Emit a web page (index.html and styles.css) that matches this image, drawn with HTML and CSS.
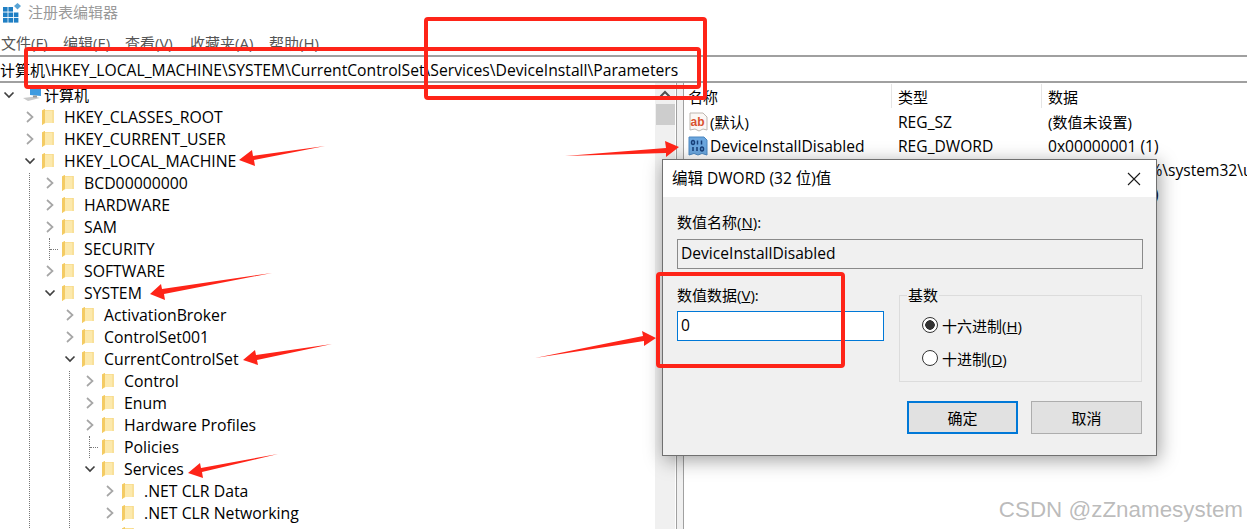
FILE: index.html
```html
<!DOCTYPE html>
<html lang="zh-CN">
<head>
<meta charset="utf-8">
<title>注册表编辑器</title>
<link rel="stylesheet" href="styles.css">
</head>
<body>
<svg class="defs" width="0" height="0" aria-hidden="true">
  <defs>
    <symbol id="folder" viewBox="0 0 12 16">
      <path d="M0 1.5 L3 0 V1 H11.5 V14 H3.5 L0 16 Z" fill="#f7d77f"/>
      <path d="M0 1.5 L3 0 V13.5 L0 16 Z" fill="#f4cb63"/>
      <path d="M3 1.5 H11.5 V14 H3 Z" fill="#fce9ad"/>
      <path d="M11.5 1 V14 H10.6 V1 Z" fill="#f6d67f"/>
    </symbol>
    <symbol id="chev-r" viewBox="0 0 10 14">
      <path d="M2 2 L7.5 7 L2 12" fill="none" stroke="#a6a6a6" stroke-width="1.7"/>
    </symbol>
    <symbol id="chev-d" viewBox="0 0 12 10">
      <path d="M1.5 2.5 L6 7 L10.5 2.5" fill="none" stroke="#404040" stroke-width="1.7"/>
    </symbol>
  </defs>
</svg>

<div class="app">
  <header class="titlebar">
    <svg class="appicon" viewBox="0 0 19 20" width="19" height="20">
      <path d="M14.5 0 L18 3 L14.5 6.5 L11 3 Z" fill="#5aa5d6"/>
      <g fill="#1f7fc4">
        <rect x="0" y="4" width="4.6" height="4.6"/><rect x="5.4" y="4" width="4.6" height="4.6"/>
        <rect x="0" y="9.5" width="4.6" height="4.6"/><rect x="5.4" y="9.5" width="4.6" height="4.6"/><rect x="10.8" y="9.5" width="4.6" height="4.6"/>
        <rect x="0" y="15" width="4.6" height="4.6"/><rect x="5.4" y="15" width="4.6" height="4.6"/><rect x="10.8" y="15" width="4.6" height="4.6"/>
      </g>
    </svg>
    <span class="apptitle">注册表编辑器</span>
  </header>

  <nav class="menubar">
    <span class="m1">文件(F)</span><span class="m2">编辑(E)</span><span class="m3">查看(V)</span><span class="m4">收藏夹(A)</span><span class="m5">帮助(H)</span>
  </nav>

  <div class="address"><span class="addr-root">计算机</span>\HKEY_LOCAL_MACHINE\SYSTEM\CurrentControlSet\Services\DeviceInstall\Parameters</div>

  <main class="panes">
    <section class="tree">
      <div class="treebody">
        <div class="row rootrow">
          <span class="chev"><svg width="12" height="10"><use href="#chev-d"/></svg></span>
          <svg class="pc" viewBox="0 0 20 18" width="20" height="18">
            <path d="M8 1 L19 2.5 V11 L8 10 Z" fill="#3f9be0"/>
            <path d="M8 1 L19 2.5 V4 L8 3 Z" fill="#8cc9f2"/>
            <path d="M1 13 L13 11.5 L18 13 L6 16 Z" fill="#c9c9c9"/>
            <path d="M11 10.5 H15 V12.5 H11 Z" fill="#9a9a9a"/>
          </svg>
          <span class="rootlabel">计算机</span>
        </div>
        <div class="group top">
          <div class="item"><div class="row"><span class="chev"><svg width="10" height="14"><use href="#chev-r"/></svg></span><svg class="fld"><use href="#folder"/></svg><span class="label">HKEY_CLASSES_ROOT</span></div></div>
          <div class="item"><div class="row"><span class="chev"><svg width="10" height="14"><use href="#chev-r"/></svg></span><svg class="fld"><use href="#folder"/></svg><span class="label">HKEY_CURRENT_USER</span></div></div>
          <div class="item">
            <div class="row"><span class="chev"><svg width="12" height="10"><use href="#chev-d"/></svg></span><svg class="fld"><use href="#folder"/></svg><span class="label">HKEY_LOCAL_MACHINE</span></div>
            <div class="group">
              <div class="item"><div class="row"><span class="chev"><svg width="10" height="14"><use href="#chev-r"/></svg></span><svg class="fld"><use href="#folder"/></svg><span class="label">BCD00000000</span></div></div>
              <div class="item"><div class="row"><span class="chev"><svg width="10" height="14"><use href="#chev-r"/></svg></span><svg class="fld"><use href="#folder"/></svg><span class="label">HARDWARE</span></div></div>
              <div class="item"><div class="row"><span class="chev"><svg width="10" height="14"><use href="#chev-r"/></svg></span><svg class="fld"><use href="#folder"/></svg><span class="label">SAM</span></div></div>
              <div class="item"><div class="row"><span class="stub"></span><svg class="fld"><use href="#folder"/></svg><span class="label">SECURITY</span></div></div>
              <div class="item"><div class="row"><span class="chev"><svg width="10" height="14"><use href="#chev-r"/></svg></span><svg class="fld"><use href="#folder"/></svg><span class="label">SOFTWARE</span></div></div>
              <div class="item last">
                <div class="row"><span class="chev"><svg width="12" height="10"><use href="#chev-d"/></svg></span><svg class="fld"><use href="#folder"/></svg><span class="label">SYSTEM</span></div>
                <div class="group">
                  <div class="item"><div class="row"><span class="chev"><svg width="10" height="14"><use href="#chev-r"/></svg></span><svg class="fld"><use href="#folder"/></svg><span class="label">ActivationBroker</span></div></div>
                  <div class="item"><div class="row"><span class="chev"><svg width="10" height="14"><use href="#chev-r"/></svg></span><svg class="fld"><use href="#folder"/></svg><span class="label">ControlSet001</span></div></div>
                  <div class="item">
                    <div class="row"><span class="chev"><svg width="12" height="10"><use href="#chev-d"/></svg></span><svg class="fld"><use href="#folder"/></svg><span class="label">CurrentControlSet</span></div>
                    <div class="group">
                      <div class="item"><div class="row"><span class="chev"><svg width="10" height="14"><use href="#chev-r"/></svg></span><svg class="fld"><use href="#folder"/></svg><span class="label">Control</span></div></div>
                      <div class="item"><div class="row"><span class="chev"><svg width="10" height="14"><use href="#chev-r"/></svg></span><svg class="fld"><use href="#folder"/></svg><span class="label">Enum</span></div></div>
                      <div class="item"><div class="row"><span class="chev"><svg width="10" height="14"><use href="#chev-r"/></svg></span><svg class="fld"><use href="#folder"/></svg><span class="label">Hardware Profiles</span></div></div>
                      <div class="item"><div class="row"><span class="stub"></span><svg class="fld"><use href="#folder"/></svg><span class="label">Policies</span></div></div>
                      <div class="item last">
                        <div class="row"><span class="chev"><svg width="12" height="10"><use href="#chev-d"/></svg></span><svg class="fld"><use href="#folder"/></svg><span class="label">Services</span></div>
                        <div class="group">
                          <div class="item"><div class="row"><span class="chev"><svg width="10" height="14"><use href="#chev-r"/></svg></span><svg class="fld"><use href="#folder"/></svg><span class="label">.NET CLR Data</span></div></div>
                          <div class="item"><div class="row"><span class="chev"><svg width="10" height="14"><use href="#chev-r"/></svg></span><svg class="fld"><use href="#folder"/></svg><span class="label">.NET CLR Networking</span></div></div>
                          <div class="item"><div class="row"><span class="chev"><svg width="10" height="14"><use href="#chev-r"/></svg></span><svg class="fld"><use href="#folder"/></svg></div></div>
                        </div>
                      </div>
                    </div>
                  </div>
                </div>
              </div>
            </div>
          </div>
        </div>
      </div>
      <div class="scrollbar">
        <svg class="sb-up" width="12" height="8" viewBox="0 0 12 8"><path d="M1.5 6.5 L6 2 L10.5 6.5" fill="none" stroke="#505050" stroke-width="2"/></svg>
        <div class="sb-thumb"></div>
      </div>
    </section>

    <div class="splitter"></div>

    <section class="values">
      <div class="vrow vhead">
        <span class="c1 hcell"><b class="cjk">名称</b></span><span class="c2 hcell"><b class="cjk">类型</b></span><span class="c3 hcell"><b class="cjk">数据</b></span>
      </div>
      <div class="vrow">
        <span class="c1">
          <svg class="vicon" viewBox="0 0 20 20" width="20" height="20">
            <path d="M2 1 H15 L19 5 V18 L15 17 L11 19 L7 17 L2 18 Z" fill="#fbf8f5" stroke="#bdb6b0"/>
            <text x="2.6" y="14" class="abtext">ab</text>
          </svg>
          <span class="vname"><b class="cjk">(默认)</b></span>
        </span>
        <span class="c2">REG_SZ</span><span class="c3 tight"><b class="cjk">(数值未设置)</b></span>
      </div>
      <div class="vrow">
        <span class="c1">
          <svg class="vicon" viewBox="0 0 20 20" width="20" height="20">
            <path d="M1 1 H16 L19 4 V19 L14 17.5 L10 19 L6 17.5 L1 19 Z" fill="#6ba6de" stroke="#4a86c0"/>
            <g fill="none" stroke="#173f78" stroke-width="1.5">
              <ellipse cx="5" cy="6.5" rx="1.5" ry="2"/>
              <path d="M9.5 4.5 V8.5 M13.5 4.5 V8.5"/>
              <path d="M5 11 V15 M9 11 V15"/>
              <ellipse cx="14" cy="13" rx="1.5" ry="2"/>
            </g>
          </svg>
          <span class="vname">DeviceInstallDisabled</span>
        </span>
        <span class="c2">REG_DWORD</span><span class="c3">0x00000001 (1)</span>
      </div>
      <div class="vrow">
        <span class="c1"></span><span class="c2"></span><span class="c3 dllpath">%SystemRoot%\system32\u</span>
      </div>
      <div class="vrow">
        <span class="c1"></span><span class="c2"></span><span class="c3">0x00000001 (1)</span>
      </div>
    </section>
  </main>
</div>

<div class="dialog">
  <div class="dlg-title">
    <span class="dlg-caption">编辑 DWORD (32 位)值</span>
    <svg class="dlg-close" width="14" height="14" viewBox="0 0 14 14"><path d="M1 1 L13 13 M13 1 L1 13" stroke="#1a1a1a" stroke-width="1.1" fill="none"/></svg>
  </div>
  <div class="dlg-body">
    <div class="lbl">数值名称(<u>N</u>):</div>
    <div class="field readonly">DeviceInstallDisabled</div>
    <div class="dlg-cols">
      <div class="col-left">
        <div class="lbl">数值数据(<u>V</u>):</div>
        <div class="field active">0</div>
      </div>
      <fieldset class="base">
        <legend>基数</legend>
        <div class="radio"><span class="dot on"></span><span>十六进制(<u>H</u>)</span></div>
        <div class="radio"><span class="dot"></span><span>十进制(<u>D</u>)</span></div>
      </fieldset>
    </div>
    <div class="dlg-btns">
      <div class="btn primary">确定</div>
      <div class="btn">取消</div>
    </div>
  </div>
</div>

<svg class="marks" viewBox="0 0 1247 529" width="1247" height="529" aria-hidden="true">
  <g fill="none" stroke="#fe2418" stroke-width="4">
    <rect x="26" y="49" width="673" height="38" rx="2"/>
    <rect x="426" y="19" width="279" height="79" rx="2"/>
    <rect x="658" y="274" width="185" height="92" rx="2"/>
  </g>
  <g fill="#fe2418">
    <path d="M325 146 L253 156 L252 150 L239 160 L255 166 L254 160 Z"/>
    <path d="M565 156 L666 148 L665 141 L679 147 L666 157 L666 153 Z"/>
    <path d="M272 273 L162 289 L161 284 L150 294 L165 300 L164 294 Z"/>
    <path d="M332 344 L256 355 L255 350 L243 360 L258 365 L257 360 Z"/>
    <path d="M278 454 L201 468 L200 463 L188 473 L203 478 L202 472 Z"/>
    <path d="M535 358 L643 336 L642 331 L656 338 L644 346 L644 341 Z"/>
  </g>
</svg>

<div class="watermark">CSDN @zZnamesystem</div>
</body>
</html>
```

FILE: styles.css
```css
* { box-sizing: border-box; }
html, body { margin: 0; padding: 0; }
body {
  position: relative;
  width: 1247px;
  height: 529px;
  overflow: hidden;
  background: #fff;
  color: #000;
  font-family: "Open Sans", "Noto Sans CJK SC", sans-serif;
  font-size: 15.8px;
}
.defs { position: absolute; }
.app { display: flex; flex-direction: column; height: 529px; }
.cjk { font-weight: 400; font-size: 15px; }

.titlebar { height: 30px; display: flex; align-items: flex-start; padding: 3px 0 0 3px; flex: none; }
.appicon { flex: none; }
.apptitle { margin-left: 6px; color: #999; font-size: 15px; line-height: 18px; }

.menubar { height: 25px; flex: none; display: flex; color: #555; font-size: 15px; padding-top: 2px; line-height: 22px; }
.menubar span { flex: none; }
.m1 { width: 63px; padding-left: 1px; }
.m2 { width: 62px; }
.m3 { width: 65px; }
.m4 { width: 79px; }

.address {
  height: 28px; flex: none; line-height: 26px; font-size: 15.7px;
  border-top: 2px solid #a0a0a0;
  border-bottom: 2px solid #a0a0a0;
  white-space: nowrap;
  overflow: hidden;
}
.addr-root { font-size: 15px; }

.panes { flex: 1; display: flex; min-height: 0; }
.tree { width: 675px; flex: none; display: flex; overflow: hidden; }
.treebody { flex: 1; overflow: hidden; padding-top: 1px; }
.row { height: 22px; display: flex; align-items: center; white-space: nowrap; }
.label { margin-left: 10px; }
.chev { width: 20px; height: 22px; margin-left: -10px; background: #fff; display: flex; align-items: center; justify-content: center; flex: none; }
.chev svg { display: block; }
.fld { width: 12px; height: 16px; margin-left: 2px; flex: none; }
.stub { width: 8px; margin-right: 4px; border-top: 1px dotted #777; flex: none; }
.stub + .fld { margin-left: 0; }

.rootrow { padding-left: 9px; }
.pc { margin-left: 3px; flex: none; margin-top: -3px; }
.rootlabel { margin-left: 2px; font-size: 15px; padding-bottom: 2px; }

.group { margin-left: 19px; }
.group.top { margin-left: 29px; }
.item { border-left: 1px dotted #777; }
.item.last { border-left-color: transparent; }

.scrollbar { width: 20px; flex: none; background: #f0f0f0; display: flex; flex-direction: column; align-items: center; }
.sb-up { margin-top: 7px; flex: none; }
.sb-thumb { width: 19px; height: 21px; background: #cdcdcd; margin-top: 6px; }

.splitter { width: 8px; flex: none; background: #f0f0f0; border-left: 1px solid #a0a0a0; border-right: 1px solid #a0a0a0; margin-left: 1px; margin-right: -1px; }

.values { flex: 1; min-width: 0; overflow: hidden; font-size: 15.6px; }
.vrow { display: grid; grid-template-columns: 208px 150px 1fr; height: 24px; align-items: center; white-space: nowrap; }
.vrow > span { padding-left: 7px; display: flex; align-items: center; }
.vhead { height: 26px; margin-top: 1px; align-items: start; }
.vhead .hcell { height: 24px; }
.vhead .c1 { padding-left: 11px; }
.vhead .c2, .vhead .c3 { border-left: 1px solid #e5e5e5; padding-left: 6px; }
.vrow .c1 { padding-left: 5px; }
.vrow .tight { padding-bottom: 2px; }
.vrow .dllpath { padding-left: 9px; }
.vname { margin-left: 2px; }
.vicon { flex: none; }
.abtext { font-family: "Liberation Sans", sans-serif; font-weight: 700; font-size: 12px; fill: #d9522f; }

.dialog {
  position: absolute; left: 662px; top: 159px; width: 495px; height: 297px;
  background: #f0f0f0; border: 1px solid #707070;
  box-shadow: 2px 4px 18px rgba(0,0,0,.38);
}
.dlg-title { height: 37px; background: #fff; display: flex; align-items: center; justify-content: space-between; padding: 0 15px 2px 9px; font-size: 15.5px; }
.dlg-close { flex: none; margin-top: 2px; }
.dlg-body { padding: 15px 14px 0 14px; }
.lbl { height: 20px; line-height: 20px; font-size: 15px; }
.field { background: #fff; height: 30px; line-height: 27px; padding-left: 3px; margin-top: 7px; font-size: 15.6px; }
.readonly { background: #f0f0f0; border: 1px solid #8a8a8a; margin-right: -1px; }
.active { border: 1px solid #0078d7; margin-top: 6px; }
.dlg-cols { display: grid; grid-template-columns: 207px 243px; gap: 15px; margin-top: 16px; }
.base { margin: 0; padding: 12px 0 0 22px; border: 1px solid #dcdcdc; height: 97px; font-size: 15px; }
.base legend { padding: 0 1px; margin-left: -15px; line-height: 20px; height: 20px; }
.radio { display: flex; align-items: center; height: 20px; margin-bottom: 13px; gap: 4px; }
.radio:first-of-type { margin-top: -2px; }
.dot { width: 16px; height: 16px; border-radius: 50%; border: 1px solid #333; background: #fff; display: flex; flex: none; }
.dot.on { background: radial-gradient(circle, #333 0 4.5px, #fff 5px); }
.dlg-btns { display: flex; justify-content: flex-end; gap: 13px; margin-top: 19px; }
.btn { width: 111px; height: 33px; background: #e1e1e1; border: 1px solid #adadad; display: flex; align-items: center; justify-content: center; font-size: 15px; }
.primary { border: 2px solid #0078d7; }

.marks { position: absolute; left: 0; top: 0; pointer-events: none; }
.watermark {
  position: absolute; right: 4px; top: 495px;
  font-family: "Liberation Sans", sans-serif; font-size: 22.4px; line-height: 30px;
  color: rgba(130,130,130,.55); white-space: nowrap;
}
```
